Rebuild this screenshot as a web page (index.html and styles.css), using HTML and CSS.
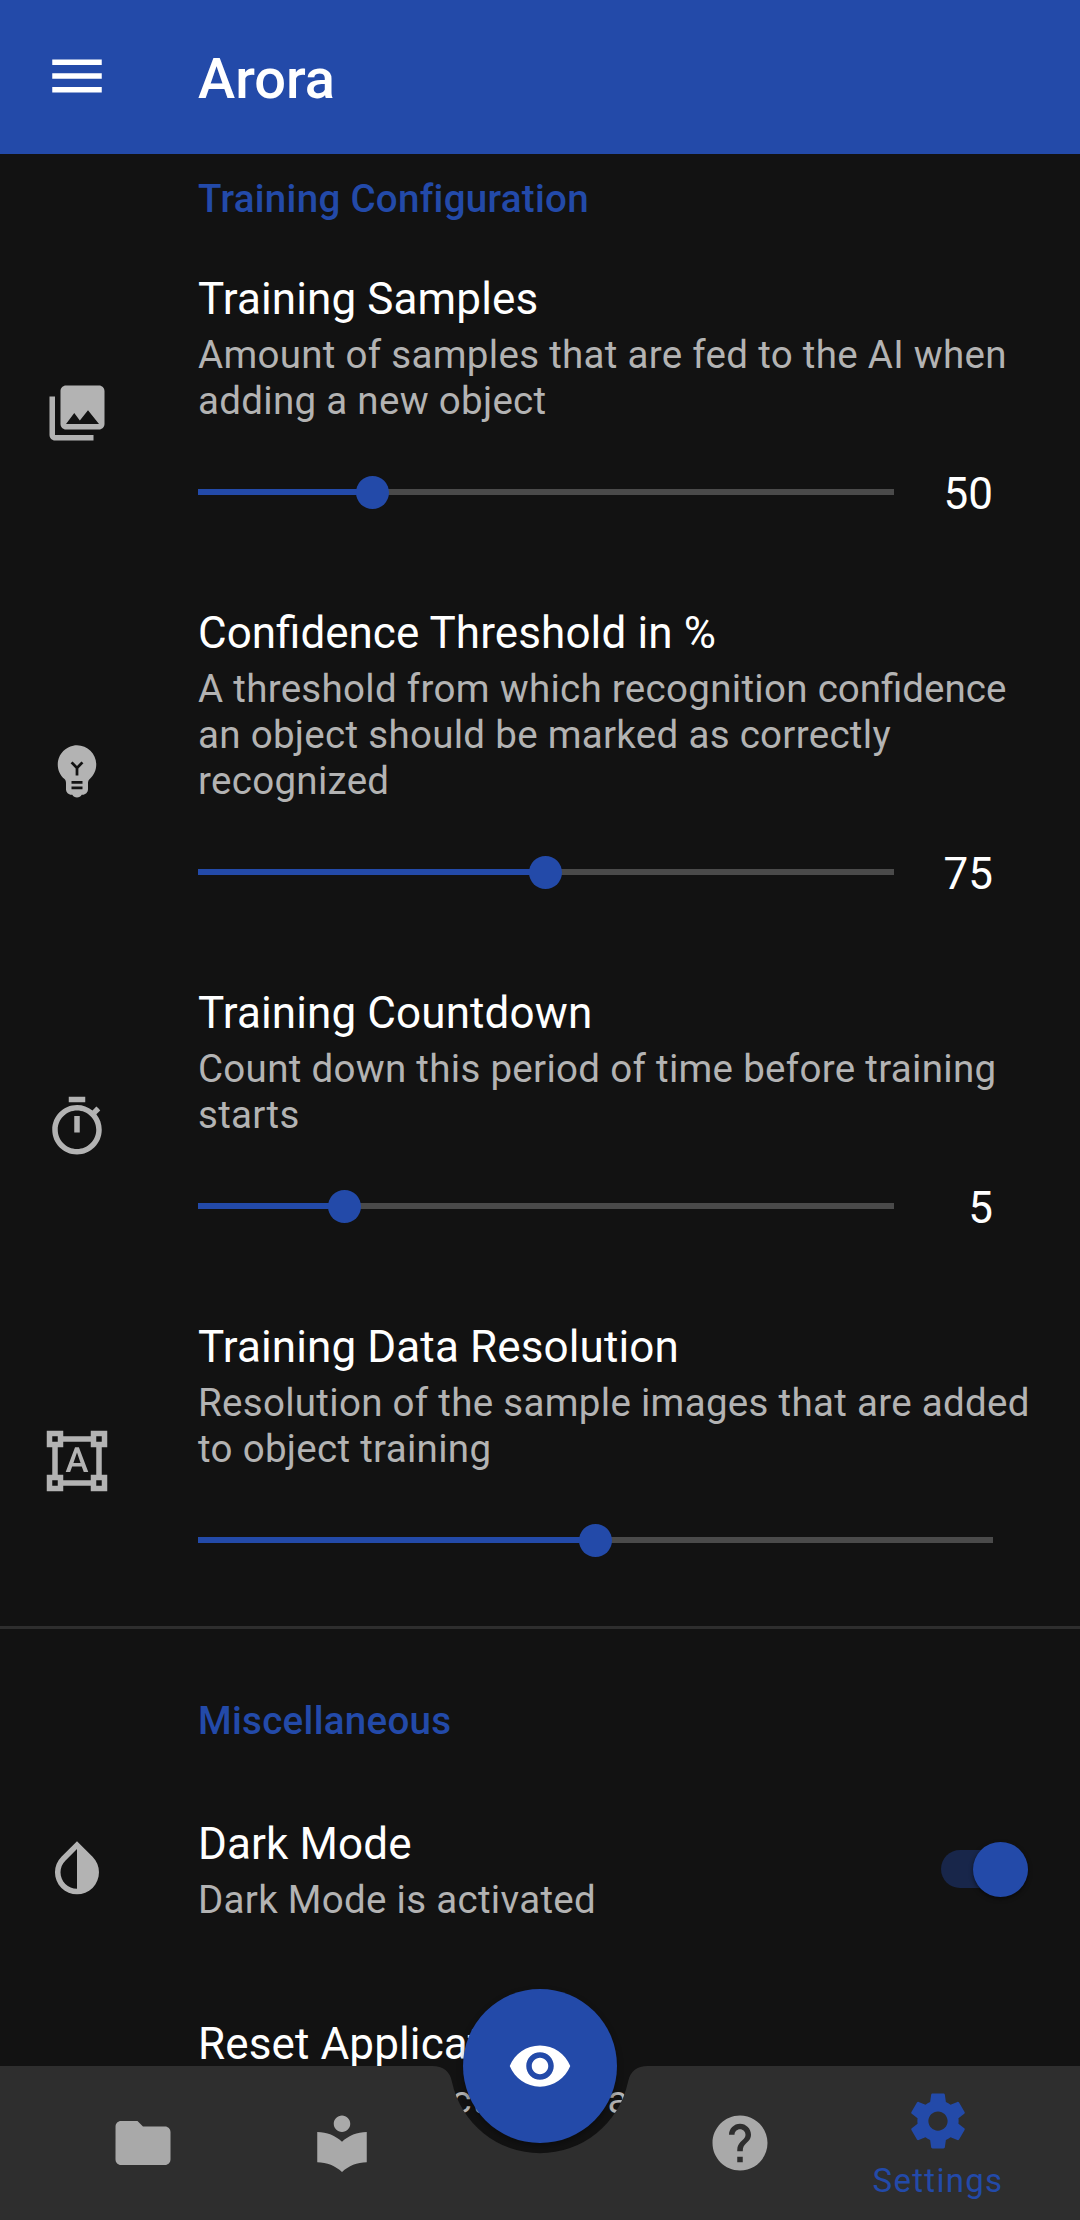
FILE: index.html
```html
<!DOCTYPE html>
<html lang="en">
<head>
<meta charset="utf-8">
<title>Arora</title>
<link rel="stylesheet" href="styles.css">
</head>
<body>
<div class="app">
  <header class="appbar">
    <div class="icon-cell"><svg class="icon white" viewBox="0 0 24 24"><path d="M3 18h18v-2H3v2zm0-5h18v-2H3v2zm0-7v2h18V6H3z"/></svg></div>
    <h1 class="appbar-title">Arora</h1>
  </header>
  <main class="list">
    <h2 class="subheader first">Training Configuration</h2>
    <section class="row">
      <div class="icon-cell"><svg class="icon grey" viewBox="0 0 24 24"><path d="M22 16V4c0-1.1-.9-2-2-2H8c-1.1 0-2 .9-2 2v12c0 1.1.9 2 2 2h12c1.100 0 2-.9 2-2zm-11-4l2.030 2.710L16 11l4 5H8l3-4zM2 6v14c0 1.100.9 2 2 2h14v-2H4V6H2z"/></svg></div>
      <div class="body">
        <div class="title">Training Samples</div>
        <div class="summary">Amount of samples that are fed to the AI when adding a new object</div>
        <div class="slider-line">
          <div class="slider"><div class="fill" style="width:174px"></div><div class="thumb"></div><div class="rest"></div></div>
          <div class="value">50</div>
        </div>
      </div>
    </section>
    <section class="row">
      <div class="icon-cell"><svg class="icon grey" viewBox="0 0 24 24"><path d="M12 3c-.46 0-.93.04-1.400.14-2.760.53-4.960 2.760-5.480 5.520-.48 2.610.48 5.010 2.220 6.560.43.38.66.91.66 1.470V19c0 1.100.9 2 2 2h.28c.35.6.98 1 1.720 1s1.380-.4 1.720-1H14c1.100 0 2-.9 2-2v-2.310c0-.55.22-1.090.64-1.460C18.090 13.950 19 12.080 19 10c0-3.870-3.130-7-7-7zm2 16h-4v-1h4v1zm0-2h-4v-1h4v1zm-1.500-5.590V14h-1v-2.590L9.670 9.590l.71-.71L12 10.500l1.620-1.620.71.71-1.830 1.820z"/></svg></div>
      <div class="body">
        <div class="title"><span class="lig">Confidence</span> Threshold in %</div>
        <div class="summary">A threshold from which recognition <span class="lig">confidence</span> an object should be marked as correctly recognized</div>
        <div class="slider-line">
          <div class="slider"><div class="fill" style="width:347px"></div><div class="thumb"></div><div class="rest"></div></div>
          <div class="value">75</div>
        </div>
      </div>
    </section>
    <section class="row">
      <div class="icon-cell"><svg class="icon grey" viewBox="0 0 24 24"><path d="M9 1h6v2H9zm10.030 6.390l1.420-1.420c-.43-.51-.9-.99-1.410-1.410l-1.420 1.420C16.070 4.740 14.120 4 12 4c-4.970 0-9 4.030-9 9s4.020 9 9 9 9-4.030 9-9c0-2.120-.74-4.070-1.970-5.610zM12 20c-3.870 0-7-3.130-7-7s3.130-7 7-7 7 3.130 7 7-3.130 7-7 7zM11 8h2v6h-2z"/></svg></div>
      <div class="body">
        <div class="title">Training Countdown</div>
        <div class="summary">Count down this period of time before training starts</div>
        <div class="slider-line">
          <div class="slider"><div class="fill" style="width:146px"></div><div class="thumb"></div><div class="rest"></div></div>
          <div class="value">5</div>
        </div>
      </div>
    </section>
    <section class="row last">
      <div class="icon-cell"><svg class="icon grey" viewBox="0 0 24 24"><path d="M23 7V1h-6v2H7V1H1v6h2v10H1v6h6v-2h10v2h6v-6h-2V7h2zM3 3h2v2H3V3zm2 18H3v-2h2v2zm12-2H7v-2H5V7h2V5h10v2h2v10h-2v2zm4 2h-2v-2h2v2zM19 5V3h2v2h-2zm-5.270 9h-3.490l-.73 2H7.890l3.400-9h1.400l3.410 9h-1.630l-.74-2zm-3.040-1.260h2.610L12 8.910l-1.310 3.830z"/></svg></div>
      <div class="body">
        <div class="title">Training Data Resolution</div>
        <div class="summary">Resolution of the sample images that are added to object training</div>
        <div class="slider-line">
          <div class="slider"><div class="fill" style="width:397px"></div><div class="thumb"></div><div class="rest"></div></div>
        </div>
      </div>
    </section>
    <hr class="divider">
    <h2 class="subheader">Miscellaneous</h2>
    <section class="row simple">
      <div class="icon-cell"><svg class="icon grey" viewBox="0 0 24 24"><path d="M17.660 7.930L12 2.270 6.340 7.930c-3.120 3.120-3.120 8.190 0 11.310C7.900 20.800 9.950 21.580 12 21.580c2.050 0 4.100-.78 5.660-2.340 3.120-3.120 3.120-8.190 0-11.310zM12 19.590c-1.600 0-3.110-.62-4.240-1.760C6.620 16.690 6 15.190 6 13.590s.62-3.110 1.760-4.240L12 5.100v14.490z"/></svg></div>
      <div class="body">
        <div class="title">Dark Mode</div>
        <div class="summary">Dark Mode is activated</div>
      </div>
      <div class="switch"><div class="switch-thumb"></div></div>
    </section>
    <section class="row simple reset">
      <div class="icon-cell"></div>
      <div class="body">
        <div class="title">Reset Application</div>
        <div class="summary">Resets all objects from all data</div>
      </div>
    </section>
  </main>
  <nav class="bottombar">
    <svg class="bar-shape" viewBox="0 0 1080 154"><path d="M0 0H432Q449 0 452 16A90 90 0 0 0 628 16Q631 0 648 0H1080V154H0Z"/></svg>
    <div class="tab tab-a"><svg class="icon tab-grey" viewBox="0 0 24 24"><path d="M10 4H4c-1.100 0-1.990.9-1.990 2L2 18c0 1.100.9 2 2 2h16c1.100 0 2-.9 2-2V8c0-1.100-.9-2-2-2h-8l-2-2z"/></svg></div>
    <div class="tab tab-b"><svg class="icon tab-grey" viewBox="0 0 24 24"><path d="M12 11.550C9.640 9.350 6.480 8 3 8v11c3.480 0 6.640 1.350 9 3.550 2.360-2.190 5.520-3.550 9-3.550V8c-3.480 0-6.640 1.350-9 3.550zM12 8c1.660 0 3-1.340 3-3s-1.340-3-3-3-3 1.340-3 3 1.340 3 3 3z"/></svg></div>
    <div class="tab tab-gap"></div>
    <div class="tab tab-c"><svg class="icon tab-grey" viewBox="0 0 24 24"><path d="M12 2C6.480 2 2 6.480 2 12s4.480 10 10 10 10-4.480 10-10S17.520 2 12 2zm1 17h-2v-2h2v2zm2.070-7.750l-.9.92C13.450 12.900 13 13.500 13 15h-2v-.5c0-1.100.45-2.100 1.170-2.830l1.240-1.260c.37-.36.59-.86.59-1.410 0-1.100-.9-2-2-2s-2 .9-2 2H8c0-2.210 1.790-4 4-4s4 1.790 4 4c0 .88-.36 1.680-.93 2.250z"/></svg></div>
    <div class="tab tab-d active"><svg class="icon blue" viewBox="0 0 24 24"><path d="M19.430 12.980c.04-.32.07-.64.07-.98s-.03-.66-.07-.98l2.110-1.650c.19-.15.24-.42.12-.64l-2-3.460c-.12-.22-.39-.3-.61-.22l-2.490 1c-.52-.4-1.080-.73-1.690-.98l-.38-2.650C14.460 2.180 14.250 2 14 2h-4c-.25 0-.46.18-.49.42l-.38 2.650c-.61.25-1.170.59-1.690.98l-2.490-1c-.23-.09-.49 0-.61.22l-2 3.460c-.13.22-.07.49.12.64l2.110 1.650c-.04.32-.07.65-.07.98s.03.66.07.98l-2.110 1.650c-.19.15-.24.42-.12.64l2 3.460c.12.22.39.3.61.22l2.490-1c.52.4 1.080.73 1.690.98l.38 2.650c.03.24.24.42.49.42h4c.25 0 .46-.18.49-.42l.38-2.650c.61-.25 1.170-.59 1.690-.98l2.490 1c.23.09.49 0 .61-.22l2-3.460c.12-.22.07-.49-.12-.64l-2.110-1.650zM12 15.500c-1.930 0-3.500-1.570-3.500-3.500s1.570-3.500 3.500-3.500 3.500 1.570 3.500 3.500-1.570 3.500-3.500 3.500z"/></svg><span class="tab-label">Settings</span></div>
    <div class="fab"><svg class="icon white" viewBox="0 0 24 24"><path d="M12 4.500C7 4.500 2.730 7.610 1 12c1.730 4.390 6 7.500 11 7.500s9.270-3.110 11-7.500c-1.730-4.390-6-7.500-11-7.500zM12 17c-2.760 0-5-2.240-5-5s2.240-5 5-5 5 2.240 5 5-2.240 5-5 5zm0-8c-1.660 0-3 1.340-3 3s1.340 3 3 3 3-1.340 3-3-1.340-3-3-3z"/></svg></div>
  </nav>
</div>
</body>
</html>
```
FILE: styles.css
```css
* { box-sizing: border-box; }
html, body { margin: 0; padding: 0; background: #121212; }
body { font-family: Roboto, "Noto Sans", sans-serif; }

.app {
  position: relative;
  width: 1080px;
  height: 2220px;
  overflow: hidden;
  display: flex;
  flex-direction: column;
  background: #121212;
}

.appbar {
  flex: none;
  height: 154px;
  background: #234aa9;
  display: flex;
  align-items: center;
}
.appbar .icon-cell { width: 198px; padding-right: 44px; padding-bottom: 3px; }
.appbar-title {
  margin: 0;
  padding-top: 4px;
  color: #fff;
  font-size: 56px;
  font-weight: 500;
  line-height: 64px;
}

.icon-cell {
  flex: none;
  width: 154px;
  display: flex;
  justify-content: center;
}
.icon { display: block; width: 66px; height: 66px; }
.white { fill: #fff; }
.grey { fill: #b3b3b3; }
.tab-grey { fill: #a9a9a9; }
.blue { fill: #234aa9; }

.list { flex: 1; min-height: 0; }

.subheader {
  margin: 0;
  padding: 0 0 0 198px;
  color: #234aa9;
  font-size: 38.5px;
  font-weight: 500;
  line-height: 46px;
  letter-spacing: 0.3px;
}
.subheader.first { margin-top: 22px; margin-bottom: 51px; }

.row {
  display: flex;
  align-items: center;
  margin-bottom: 82px;
}
.row .icon-cell { width: 154px; padding-top: 28px; }
.row.last { margin-bottom: 53px; }
.body { flex: 1; min-width: 0; padding: 0 44px 0 44px; }

.title {
  color: #fff;
  font-size: 44px;
  line-height: 52px;
  letter-spacing: 0.12px;
  margin-bottom: 7px;
}
.summary {
  color: #b3b3b3;
  font-size: 38.5px;
  line-height: 46px;
  letter-spacing: 0.3px;
}
.lig { letter-spacing: 0; font-variant-ligatures: common-ligatures; }

.slider-line {
  display: flex;
  align-items: center;
  height: 66px;
  margin-top: 35px;
  padding-right: 43px;
}
.slider {
  flex: 1;
  display: flex;
  align-items: center;
  height: 33px;
}
.fill { flex: none; height: 6px; background: #234aa9; }
.thumb {
  flex: none;
  width: 33px;
  height: 33px;
  margin-right: -16px;
  margin-left: -16px;
  border-radius: 50%;
  background: #234aa9;
  position: relative;
  z-index: 1;
}
.rest { flex: 1; height: 6px; background: #4a4a4a; }
.value {
  flex: none;
  width: 99px;
  padding-top: 3px;
  color: #fff;
  font-size: 44px;
  text-align: right;
}

.divider {
  margin: 0;
  border: 0;
  height: 3px;
  background: #2e2e2e;
}
.divider + .subheader { margin-top: 69px; margin-bottom: 74px; }

.row.simple { margin-bottom: 95px; }
.row.simple .icon-cell { padding-top: 0; padding-bottom: 6px; }
.switch {
  flex: none;
  position: relative;
  width: 87px;
  height: 38px;
  margin-right: 52px;
  margin-bottom: 4px;
  border-radius: 19px;
  background: #18264a;
}
.switch-thumb {
  position: absolute;
  right: 0;
  top: -8px;
  width: 55px;
  height: 55px;
  border-radius: 50%;
  background: #234aa9;
  box-shadow: 0 2px 4px rgba(0,0,0,.5);
}

.bottombar {
  position: absolute;
  left: 0;
  right: 0;
  bottom: 0;
  height: 154px;
  display: flex;
}
.bar-shape {
  position: absolute;
  left: 0;
  top: 0;
  width: 1080px;
  height: 154px;
  fill: #2e2e2e;
}
.tab {
  position: relative;
  display: flex;
  flex-direction: column;
  align-items: center;
  justify-content: center;
  height: 154px;
}
.tab-a { width: 200px; margin-left: 43px; }
.tab-b { width: 198px; }
.tab-gap { flex: 1; }
.tab-c { width: 198px; }
.tab-d { width: 198px; margin-right: 43px; justify-content: flex-start; padding-top: 22px; }
.tab-label {
  color: #234aa9;
  font-size: 33px;
  line-height: 39px;
  letter-spacing: 1.3px;
  margin-top: 7px;
}

.fab {
  position: absolute;
  left: 463px;
  top: -77px;
  width: 154px;
  height: 154px;
  border-radius: 50%;
  background: #234aa9;
  display: flex;
  align-items: center;
  justify-content: center;
  box-shadow: 0 3px 6px rgba(0,0,0,.35);
}
```
